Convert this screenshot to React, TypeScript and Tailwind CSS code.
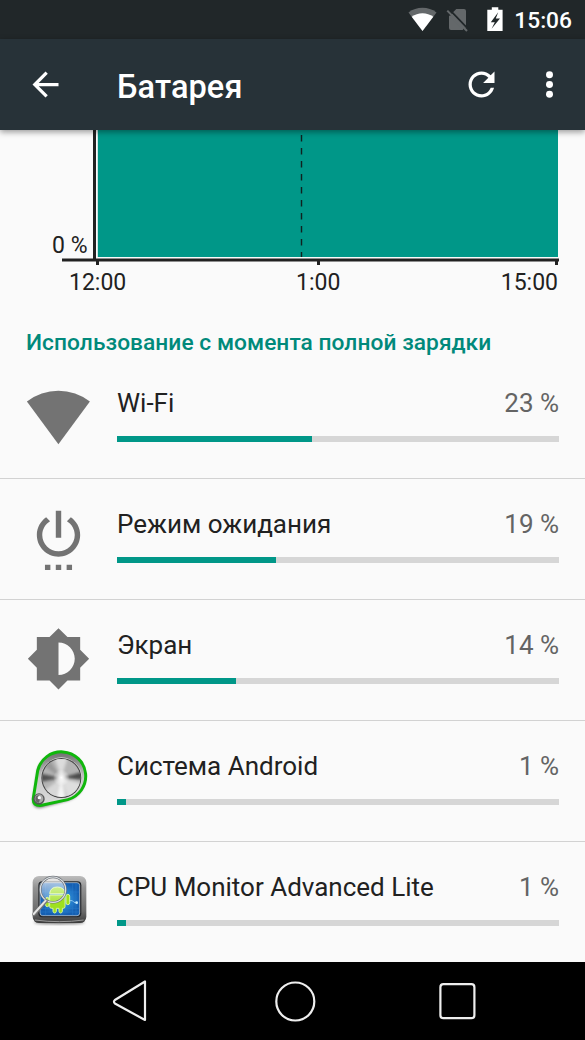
import React from "react";

const WifiIcon = () => (
  <svg width="65" height="65" viewBox="26 383.7 65 65" className="block shrink-0">
    <path d="M58.4 444 26.9 401.2A51.5 51.5 0 0 1 89.9 401.2Z" fill="#737373" />
  </svg>
);

const StandbyIcon = () => (
  <svg width="65" height="65" viewBox="0 -0.1 24 24" className="block shrink-0" fill="#737373">
    <path d="M7 24h2v-2H7v2zm4 0h2v-2h-2v2zm2-22h-2v10h2V2zm3.56 2.44l-1.45 1.45C16.84 6.94 18 8.83 18 11c0 3.31-2.69 6-6 6s-6-2.69-6-6c0-2.17 1.16-4.06 2.88-5.12L7.44 4.44C5.36 5.88 4 8.28 4 11c0 4.42 3.58 8 8 8s8-3.58 8-8c0-2.72-1.36-5.12-3.44-6.56zM15 24h2v-2h-2v2z" />
  </svg>
);

const ScreenIcon = () => (
  <svg width="65" height="65" viewBox="0 -0.1 24 24" className="block shrink-0" fill="#737373">
    <path d="M20 15.31L23.31 12 20 8.69V4h-4.69L12 .69 8.69 4H4v4.69L.69 12 4 15.31V20h4.69L12 23.31 15.31 20H20v-4.69zM12 18V6c3.31 0 6 2.69 6 6s-2.69 6-6 6z" />
  </svg>
);

const SystemIcon = () => (
  <svg width="65" height="65" viewBox="33 21 195 195" className="block shrink-0">
    <defs>
      <filter id="soft" x="-30%" y="-30%" width="160%" height="160%">
        <feGaussianBlur stdDeviation="5" />
      </filter>
      <linearGradient id="plate" x1="0" y1="0" x2="0" y2="1">
        <stop offset="0" stopColor="#6e6e6e" />
        <stop offset="0.5" stopColor="#c9c9c9" />
        <stop offset="1" stopColor="#dcdcdc" />
      </linearGradient>
      <clipPath id="knob">
        <circle cx="139" cy="114" r="57" />
      </clipPath>
      <radialGradient id="glow">
        <stop offset="0" stopColor="#fff" />
        <stop offset="1" stopColor="#fff" stopOpacity="0" />
      </radialGradient>
    </defs>
    <path d="M54 182 68 92A72 72 0 1 1 162 180L82 202Q54 208 54 182Z" fill="#000" opacity="0.6" filter="url(#soft)" />
    <path d="M55 174 68 92A73 73 0 1 1 158 179L80 196Q52 199 55 174Z" fill="url(#plate)" stroke="#10b70c" strokeWidth="9" />
    <circle cx="139" cy="114" r="62" fill="#d8d8d8" />
    <circle cx="139" cy="114" r="60" fill="#444" />
    <g clipPath="url(#knob)">
      <rect x="75" y="50" width="130" height="130" fill="#b4b4b4" />
      <g filter="url(#soft)">
        <path d="M139 114 65 98V128Z" fill="#505050" />
        <path d="M139 114 213 92V120Z" fill="#484848" />
        <path d="M139 114 110 30H165Z" fill="#dcdcdc" />
        <path d="M139 114 165 200H215L220 135Z" fill="#dedede" />
        <path d="M139 114 70 165 115 200Z" fill="#d8d8d8" />
        <path d="M139 114 118 200H158Z" fill="#f4f4f4" />
        <path d="M139 114 60 60 90 40Z" fill="#999" />
      </g>
      <circle cx="139" cy="113" r="25" fill="url(#glow)" />
    </g>
    <circle cx="72" cy="177" r="17" fill="#555" />
    <circle cx="72" cy="176" r="13" fill="#aaa" />
    <path d="M61 177a11 11 0 0 1 11-11l3 10-3 12a11 11 0 0 1-11-11" fill="#666" />
    <circle cx="73" cy="173" r="5" fill="#f4f4f4" />
  </svg>
);

const CpuIcon = () => (
  <svg width="65" height="65" viewBox="33 24 195 195" className="block shrink-0">
    <defs>
      <filter id="shade" x="-30%" y="-60%" width="160%" height="220%">
        <feGaussianBlur stdDeviation="4" />
      </filter>
      <linearGradient id="case" x1="0" y1="0" x2="0" y2="1">
        <stop offset="0" stopColor="#bdbdbd" />
        <stop offset="0.25" stopColor="#929292" />
        <stop offset="0.75" stopColor="#6b6b6b" />
        <stop offset="1" stopColor="#3c3c3c" />
      </linearGradient>
      <radialGradient id="blue">
        <stop offset="0" stopColor="#3fb0f5" />
        <stop offset="1" stopColor="#155fb2" />
      </radialGradient>
      <linearGradient id="lens" x1="0" y1="0" x2="0" y2="1">
        <stop offset="0" stopColor="#fff" stopOpacity="0.75" />
        <stop offset="1" stopColor="#fff" stopOpacity="0.15" />
      </linearGradient>
    </defs>
    <ellipse cx="133" cy="187" rx="76" ry="5" fill="#000" opacity="0.6" filter="url(#shade)" />
    <rect x="53" y="48" width="161" height="141" rx="19" fill="url(#case)" />
    <path d="M60 180q73 10 146 0" fill="none" stroke="#999" strokeWidth="3" />
    <rect x="70" y="64" width="129" height="108" rx="12" fill="#25282c" />
    <rect x="75" y="68" width="119" height="99" rx="8" fill="url(#blue)" stroke="#c8d7e3" strokeWidth="2" />
    <g stroke="#2a7fce" strokeWidth="2" opacity="0.7">
      <path d="M92 70v96M173 70v96M77 96h116M77 145h116M77 156h116M183 70v96" />
    </g>
    <g fill="#9ee01f" stroke="#d9f79a" strokeWidth="3">
      <path d="M104 101q2-20 23-20t23 20ZM104 105h46v35q0 5-5 5h-3v9q-1 5-5 5t-5-5v-9h-8v9q-1 5-5 5t-5-5v-9h-4q-6 0-6-5Z" />
      <rect x="153" y="103" width="11" height="31" rx="5.5" />
      <rect x="92" y="112" width="10" height="28" rx="5" />
    </g>
    <path d="M164 122h8l5 5h9" fill="none" stroke="#c3ecff" strokeWidth="2" />
    <circle cx="185" cy="128" r="4" fill="#c3ecff" />
    <circle cx="114" cy="89" r="37" fill="url(#lens)" />
    <circle cx="114" cy="89" r="38" fill="none" stroke="#6d7278" strokeWidth="7" />
    <circle cx="114" cy="89" r="38" fill="none" stroke="#dfe3e6" strokeWidth="3.5" />
    <path d="M93 123 57 163" stroke="#777" strokeWidth="11" strokeLinecap="round" />
    <path d="M92 122 56 162" stroke="#e6e6e6" strokeWidth="6" strokeLinecap="round" />
  </svg>
);

const rows = [
  { name: "Wi-Fi", value: "23 %", fill: 195, icon: <WifiIcon /> },
  { name: "Режим ожидания", value: "19 %", fill: 159, icon: <StandbyIcon /> },
  { name: "Экран", value: "14 %", fill: 119, icon: <ScreenIcon /> },
  { name: "Система Android", value: "1 %", fill: 9, icon: <SystemIcon /> },
  { name: "CPU Monitor Advanced Lite", value: "1 %", fill: 9, icon: <CpuIcon /> },
];

function StatusBar() {
  return (
    <div className="flex h-[39px] shrink-0 items-center justify-end bg-[#212729] pr-[13px] text-white">
      <svg width="100" height="39" viewBox="405 0 100 39" className="block">
        <path d="M422.5 31 408.5 12.4A23.5 23.5 0 0 1 436.5 12.4Z" fill="#64686a" />
        <path d="M422.5 31 411.7 16.8A18 18 0 0 1 433.3 16.8Z" fill="#fff" />
        <path d="M456.3 9H464a2 2 0 0 1 2 2V28.5L452.6 12.8ZM449 15.2 463.5 30H451a2 2 0 0 1-2-2Z" fill="#64686a" />
        <path d="M451 15 464 28" stroke="#64686a" strokeWidth="5" />
        <path d="M450 10.2 468.5 29.4" stroke="#212729" strokeWidth="1.8" />
        <path d="M447.3 10.6 467 31" stroke="#64686a" strokeWidth="2" />
        <path d="M491.8 7.3h6.5v2.4h4.3V31H487.3V9.7h4.5Z" fill="#fff" />
        <path d="M498.2 12.2 490.8 22.2h4L491.6 28.8 500 18.6h-4.2Z" fill="#212729" />
      </svg>
      <span className="ml-[9.5px] pt-[2px] text-[22.75px] font-medium leading-[26px]">15:06</span>
    </div>
  );
}

function AppBar() {
  return (
    <div className="relative z-10 flex h-[91px] shrink-0 items-center bg-[#273238] text-white shadow-[0_2px_6px_rgba(0,0,0,0.4)]">
      <svg width="39" height="39" viewBox="0 0 24 24" className="ml-[26px] block" fill="#fff">
        <path d="M20 11H7.83l5.59-5.59L12 4l-8 8 8 8 1.41-1.41L7.83 13H20v-2z" />
      </svg>
      <h1 className="ml-[52px] pt-[4px] text-[32.5px] font-medium leading-[38px] tracking-[0.1px]">Батарея</h1>
      <svg width="39" height="39" viewBox="0 0 24 24" className="ml-auto block" fill="#fff">
        <path d="M17.65 6.35C16.2 4.9 14.21 4 12 4c-4.42 0-7.99 3.58-7.99 8s3.57 8 7.99 8c3.73 0 6.84-2.55 7.73-6h-2.08c-.82 2.33-3.04 4-5.65 4-3.31 0-6-2.69-6-6s2.69-6 6-6c1.66 0 3.14.69 4.22 1.78L13 11h7V4l-2.35 2.35z" />
      </svg>
      <svg width="39" height="39" viewBox="0 0 24 24" className="ml-[29px] mr-[16px] block" fill="#fff">
        <circle cx="12" cy="6" r="2.15" />
        <circle cx="12" cy="12" r="2.15" />
        <circle cx="12" cy="18" r="2.15" />
      </svg>
    </div>
  );
}

function Chart() {
  return (
    <div className="relative h-[172px] shrink-0 text-[23px] leading-[26px] text-[#212121]">
      <svg width="585" height="172" viewBox="0 130 585 172" className="block">
        <rect x="97.8" y="130" width="460.2" height="127" fill="#009788" />
        <path d="M301.5 130V257" stroke="#10211f" strokeWidth="1.4" strokeDasharray="6.5 6.5" strokeDashoffset="8" />
        <path d="M94.5 130V260" stroke="#212121" strokeWidth="3" />
        <path d="M62 260H559" stroke="#212121" strokeWidth="3" />
        <path d="M97.5 260v5M318.5 260v5M556.5 260v5" stroke="#212121" strokeWidth="3" />
      </svg>
      <span className="absolute left-[52px] top-[103px]">0 %</span>
      <span className="absolute left-[69px] top-[140px]">12:00</span>
      <span className="absolute left-[296px] top-[140px]">1:00</span>
      <span className="absolute right-[27px] top-[140px]">15:00</span>
    </div>
  );
}

export default function App() {
  return (
    <div className="flex h-[1040px] w-[585px] flex-col overflow-hidden bg-[#fafafa] font-['Roboto',sans-serif]">
      <StatusBar />
      <AppBar />
      <main className="flex min-h-0 flex-1 flex-col overflow-hidden">
        <Chart />
        <h2 className="h-[56px] shrink-0 whitespace-nowrap pl-[26px] pt-[28px] text-[22.75px] font-medium leading-[26px] tracking-[0.04px] text-[#00897b]">
          Использование с момента полной зарядки
        </h2>
        {rows.map((row) => (
          <div key={row.name} className="flex h-[121px] shrink-0 border-b border-[#d2d2d2] pl-[26px] pr-[26px] pt-[26px]">
            {row.icon}
            <div className="ml-[26px] flex-1 pt-[4px]">
              <div className="flex justify-between whitespace-nowrap text-[26px] leading-[30px]">
                <span className="text-[#212121]">{row.name}</span>
                <span className="text-[#646464]">{row.value}</span>
              </div>
              <div className="mt-[18px] h-[6px] bg-[#d6d6d6]">
                <div className="h-full bg-[#009788]" style={{ width: row.fill }} />
              </div>
            </div>
          </div>
        ))}
      </main>
      <nav className="h-[78px] shrink-0 bg-black">
        <svg width="585" height="78" viewBox="0 962 585 78" className="block" fill="none" stroke="#eee" strokeWidth="2.2" strokeLinejoin="round">
          <path d="M145 981.5V1020L114.9 1003.5Q113 1001.8 114.9 1000Z" />
          <circle cx="295.3" cy="1001.5" r="19" />
          <rect x="440.4" y="984.2" width="34" height="34" rx="3" />
        </svg>
      </nav>
    </div>
  );
}
